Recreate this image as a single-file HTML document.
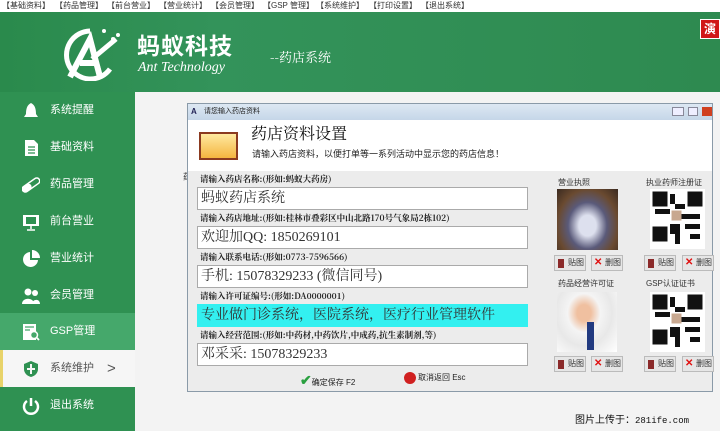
<!DOCTYPE html>
<html><head><meta charset="utf-8"><style>
*{margin:0;padding:0;box-sizing:border-box}
body{width:720px;height:431px;overflow:hidden;background:#f3f3f3;font-family:"Liberation Sans","Noto Sans CJK SC",sans-serif;position:relative}
.abs{position:absolute}
.menu{left:0;top:0;width:720px;height:12px;background:#fff;font-size:8px;color:#333;line-height:12px;white-space:nowrap}
.menu span{position:absolute;top:0}
.hdr{left:0;top:12px;width:720px;height:80px;background:linear-gradient(90deg,#2a8a4c,#33935a 30%,#2e8a50)}
.side{left:0;top:92px;width:135px;height:339px;background:#2f9152}
.it{position:absolute;left:0;width:135px;height:37px;color:#fff;font-size:11px;line-height:37px;padding-left:50px}
.ic{position:absolute;left:22px;top:10px;width:18px;height:18px}
.dlg{left:187px;top:103px;width:526px;height:289px;background:#ececec;border:1px solid #8a9aa8}
.tb{left:0;top:0;width:524px;height:16px;background:linear-gradient(#dde8f3,#c5d6e8);font-size:7px;line-height:16px;padding-left:16px;color:#222}
.wh{left:0;top:16px;width:524px;height:51px;background:#fff}
.lb{position:absolute;left:12px;font-size:8.5px;font-weight:bold;color:#222;font-family:"Noto Serif CJK SC","Liberation Serif",serif}
.in{position:absolute;left:9px;width:331px;height:23px;background:#fff;border:1px solid #aaa;font-size:14px;line-height:21px;padding-left:3px;color:#333;font-family:"Liberation Serif","Noto Serif CJK SC",serif}
.cap{position:absolute;font-size:8px;color:#333}
.btn{position:absolute;width:32px;height:16px;background:#e6e6e6;border:1px solid #bbb;font-size:8px;line-height:14px;color:#333;padding-left:13px}
.btn i{position:absolute;left:3px;top:3px;width:6px;height:9px;background:#8b2a2a}
.btn b{position:absolute;left:2px;top:0;color:#e01010;font-size:10px;font-weight:bold}
</style></head><body>
<div class="abs menu">
<span style="left:2px">【基础资料】</span><span style="left:55px">【药品管理】</span><span style="left:107px">【前台营业】</span><span style="left:159px">【营业统计】</span><span style="left:211px">【会员管理】</span><span style="left:263px">【GSP 管理】</span><span style="left:316px">【系统维护】</span><span style="left:369px">【打印设置】</span><span style="left:421px">【退出系统】</span>
</div>
<div class="abs hdr">
<svg class="abs" style="left:60px;top:13px" width="62" height="56" viewBox="0 0 62 56"><path d="M30 6 A24 24 0 1 0 50 44" stroke="#fff" stroke-width="5" fill="none"/><path d="M10 52 L30 14 L40 52 M20 38 L38 38" stroke="#fff" stroke-width="6" fill="none"/><path d="M32 34 L56 14 M40 50 L36 36" stroke="#fff" stroke-width="5" fill="none"/><circle cx="44" cy="6" r="2" fill="#fff"/><circle cx="53" cy="14" r="2" fill="#fff"/><circle cx="58" cy="10" r="2" fill="#fff"/></svg>
<div class="abs" style="left:137px;top:20px;font-size:23px;line-height:28px;font-weight:bold;color:#fff;letter-spacing:1px">蚂蚁科技</div>
<div class="abs" style="left:138px;top:48px;font-size:14px;line-height:16px;font-style:italic;color:#fff;font-family:'Liberation Serif',serif">Ant Technology</div>
<div class="abs" style="left:270px;top:35px;font-size:13px;color:#fff;font-family:'Noto Serif CJK SC',serif">--药店系统</div>
<div class="abs" style="left:700px;top:7px;width:20px;height:20px;background:#d01818;border:1px solid #fff;color:#fff;font-size:12px;font-weight:bold;line-height:18px;padding-left:3px">演</div>
</div>
<div class="abs side">
<div class="it" style="top:0">系统提醒<svg class="ic" viewBox="0 0 18 18"><path d="M9 1 C5 3 4 7 4 12 L2 15 H16 L14 12 C14 7 13 3 9 1Z" fill="#fff"/></svg></div>
<div class="it" style="top:37px">基础资料<svg class="ic" viewBox="0 0 18 18"><path d="M3 1 H12 L16 5 V17 H3Z" fill="#fff"/><path d="M6 8H13M6 11H13M6 14H13" stroke="#2f9152" stroke-width="1.3"/></svg></div>
<div class="it" style="top:74px">药品管理<svg class="ic" viewBox="0 0 18 18"><rect x="-1" y="6" width="20" height="6" rx="3" transform="rotate(-35 9 9)" fill="none" stroke="#fff" stroke-width="1.5"/><rect x="-1" y="6" width="10" height="6" rx="3" transform="rotate(-35 9 9)" fill="#fff"/></svg></div>
<div class="it" style="top:111px">前台营业<svg class="ic" viewBox="0 0 18 18"><rect x="1" y="2" width="16" height="11" fill="#fff"/><rect x="4" y="4" width="10" height="7" fill="#2f9152"/><path d="M9 13V16M5 17H13" stroke="#fff" stroke-width="1.5"/></svg></div>
<div class="it" style="top:148px">营业统计<svg class="ic" viewBox="0 0 18 18"><path d="M8 2 A7.5 7.5 0 1 0 16 10 H8Z" fill="#fff"/><path d="M10 0 A8 8 0 0 1 18 8 H10Z" fill="#fff"/></svg></div>
<div class="it" style="top:185px">会员管理<svg class="ic" viewBox="0 0 18 18"><circle cx="6" cy="5" r="3.5" fill="#fff"/><circle cx="13" cy="6" r="3" fill="#fff"/><path d="M0 17 C0 10 12 10 12 17Z M10 17 C10 12 18 11 18 17Z" fill="#fff"/></svg></div>
<div class="it" style="top:221px;background:#45a86b">GSP管理<svg class="ic" viewBox="0 0 18 18"><rect x="1" y="1" width="13" height="16" fill="#fff"/><path d="M3 4H12M3 7H8" stroke="#45a86b" stroke-width="1.3"/><circle cx="12" cy="12" r="3.5" fill="#45a86b" stroke="#fff" stroke-width="1.5"/><path d="M14.5 14.5 L17 17" stroke="#fff" stroke-width="1.8"/></svg></div>
<div class="it" style="top:258px;background:#f6f6f6;color:#555;border-left:3px solid #e8d36a;padding-left:47px">系统维护<span style="position:absolute;left:104px;font-size:15px;color:#555">&gt;</span><svg class="ic" style="left:19px" viewBox="0 0 18 18"><path d="M9 1 L16 4 V9 C16 13 13 16 9 17 C5 16 2 13 2 9 V4Z" fill="#2f9152"/><path d="M9 4 V14 M5 9 H13" stroke="#f6f6f6" stroke-width="2"/></svg></div>
<div class="it" style="top:295px">退出系统<svg class="ic" viewBox="0 0 18 18"><path d="M5 4 A7 7 0 1 0 13 4" stroke="#fff" stroke-width="2.5" fill="none"/><path d="M9 1V9" stroke="#fff" stroke-width="2.5"/></svg></div>
</div>
<div class="abs" style="left:183px;top:170px;font-size:9px;color:#333">药</div>
<div class="abs dlg">
<div class="abs tb">请您输入药店资料<span style="position:absolute;left:3px;top:0;color:#225;font-weight:bold;font-size:8px">A</span>
<span style="position:absolute;left:484px;top:3px;width:12px;height:9px;border:1px solid #889;background:#eef"></span><span style="position:absolute;left:500px;top:3px;width:10px;height:9px;border:1px solid #889;background:#eef"></span><span style="position:absolute;left:514px;top:3px;width:10px;height:9px;background:#d04020"></span></div>
<div class="abs wh">
<div class="abs" style="left:11px;top:12px;width:39px;height:28px;border:2px solid #8b3a20;background:linear-gradient(#ffe9a0,#f4b540)"></div>
<div class="abs" style="left:63px;top:1px;font-size:16px;color:#111;font-family:'Noto Serif CJK SC',serif">药店资料设置</div>
<div class="abs" style="left:64px;top:27px;font-size:9px;color:#222">请输入药店资料，以便打单等一系列活动中显示您的药店信息！</div>
</div>
<div class="lb" style="top:69px">请输入药店名称:(形如:蚂蚁大药房)</div>
<div class="in" style="top:83px">蚂蚁药店系统</div>
<div class="lb" style="top:108px">请输入药店地址:(形如:桂林市叠彩区中山北路170号气象局2栋102)</div>
<div class="in" style="top:122px">欢迎加QQ: 1850269101</div>
<div class="lb" style="top:147px">请输入联系电话:(形如:0773-7596566)</div>
<div class="in" style="top:161px">手机: 15078329233 (微信同号)</div>
<div class="lb" style="top:186px">请输入许可证编号:(形如:DA0000001)</div>
<div class="in" style="top:200px;background:#33f0f0;border-color:#33f0f0">专业做门诊系统，医院系统，医疗行业管理软件</div>
<div class="lb" style="top:225px">请输入经营范围:(形如:中药材,中药饮片,中成药,抗生素制剂,等)</div>
<div class="in" style="top:239px">邓采采: 15078329233</div>
<div class="abs" style="left:112px;top:268px;font-size:8px;color:#222"><span style="color:#2aa040;font-size:14px;font-weight:bold">✔</span>确定保存 F2</div>
<div class="abs" style="left:216px;top:268px;font-size:8px;color:#222"><span style="display:inline-block;width:12px;height:12px;border-radius:50%;background:#d02020;vertical-align:middle;margin-right:2px"></span>取消返回 Esc</div>
<div class="cap" style="left:370px;top:73px">营业执照</div>
<div class="cap" style="left:458px;top:73px">执业药师注册证</div>
<div class="cap" style="left:370px;top:174px">药品经营许可证</div>
<div class="cap" style="left:458px;top:174px">GSP认证证书</div>
<div class="abs" style="left:369px;top:85px;width:61px;height:61px;background:radial-gradient(ellipse at 50% 60%,#dde0ee 20%,#5a5a7a 45%,#6a4a30 70%,#3a2a20)"></div>
<div class="abs" style="left:369px;top:188px;width:60px;height:60px;background:radial-gradient(ellipse at 45% 35%,#f0c0a0 15%,#f4f4f4 35%,#e8e8e8 60%,#fff)"><div style="position:absolute;left:30px;top:30px;width:7px;height:28px;background:#223a80"></div></div>
<svg class="abs" style="left:462px;top:85px" width="55" height="60" viewBox="0 0 11 12"><rect width="11" height="12" fill="#fff"/><g fill="#111"><rect x=".5" y=".5" width="3" height="3"/><rect x="7.5" y=".5" width="3" height="3"/><rect x=".5" y="7.5" width="3" height="3"/><rect x="4" y="1" width="1" height="2"/><rect x="5" y="3" width="2" height="1"/><rect x="1" y="4" width="3" height="1"/><rect x="6" y="5" width="4" height="1"/><rect x="4" y="7" width="2" height="2"/><rect x="7" y="7" width="3" height="1"/><rect x="8" y="9" width="2" height="1"/><rect x="5" y="9" width="1" height="2"/></g><rect x="4.3" y="4.3" width="2" height="2" fill="#c8a890"/></svg>
<svg class="abs" style="left:462px;top:188px" width="55" height="60" viewBox="0 0 11 12"><rect width="11" height="12" fill="#fff"/><g fill="#111"><rect x=".5" y=".5" width="3" height="3"/><rect x="7.5" y=".5" width="3" height="3"/><rect x=".5" y="7.5" width="3" height="3"/><rect x="4" y="1" width="1" height="2"/><rect x="5" y="3" width="2" height="1"/><rect x="1" y="4" width="3" height="1"/><rect x="6" y="5" width="4" height="1"/><rect x="4" y="7" width="2" height="2"/><rect x="7" y="7" width="3" height="1"/><rect x="8" y="9" width="2" height="1"/><rect x="5" y="9" width="1" height="2"/></g><rect x="4.3" y="4.3" width="2" height="2" fill="#c8a890"/></svg>
<div class="btn" style="left:366px;top:151px"><i></i>贴图</div>
<div class="btn" style="left:403px;top:151px"><b>✕</b>删图</div>
<div class="btn" style="left:456px;top:151px"><i></i>贴图</div>
<div class="btn" style="left:494px;top:151px"><b>✕</b>删图</div>
<div class="btn" style="left:366px;top:252px"><i></i>贴图</div>
<div class="btn" style="left:403px;top:252px"><b>✕</b>删图</div>
<div class="btn" style="left:456px;top:252px"><i></i>贴图</div>
<div class="btn" style="left:494px;top:252px"><b>✕</b>删图</div>
</div>
<div class="abs" style="left:575px;top:411px;font-size:10px;color:#111">图片上传于：<span style="font-family:'Liberation Mono',monospace;font-size:9px">281ife.com</span></div>
</body></html>
